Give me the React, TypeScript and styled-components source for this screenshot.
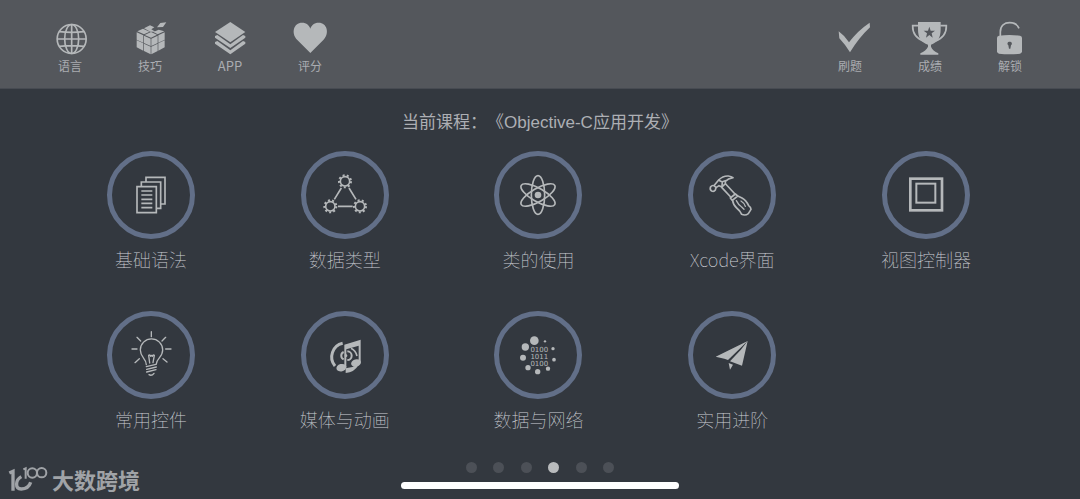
import React from "react";
import styled, { createGlobalStyle } from "styled-components";

const color = {
  page: "#33383f",
  header: "#54575c",
  icon: "#b5b8ba",
  label: "#aaacb1",
  ring: "#626f88",
};

const GlobalStyle = createGlobalStyle`
  * { box-sizing: border-box; }
  body {
    margin: 0;
    background: ${color.page};
    font-family: "Liberation Sans", "Noto Sans CJK SC", sans-serif;
  }
  button {
    margin: 0;
    padding: 0;
    border: 0;
    background: none;
    font: inherit;
    cursor: pointer;
  }
`;

const Page = styled.div`
  position: relative;
  display: flex;
  flex-direction: column;
  min-height: 100vh;
  background: ${color.page};
`;

const Header = styled.header`
  display: flex;
  justify-content: space-between;
  padding: 20px 30px 13px;
  background: ${color.header};
  border-bottom: 1px solid #474b52;
`;

const Tools = styled.nav`
  display: flex;
`;

const Tool = styled.button`
  display: flex;
  flex-direction: column;
  align-items: center;
  width: 80px;
`;

const ToolLabel = styled.span<{ $latin?: boolean }>`
  font-family: "Noto Sans CJK SC", sans-serif;
  font-size: ${(p) => (p.$latin ? 13 : 12)}px;
  font-weight: 400;
  line-height: 19px;
  color: ${color.label};
`;

const ToolSvg = styled.svg`
  width: 36px;
  height: 36px;
  overflow: visible;
  fill: ${color.icon};
  stroke: none;
`;

const Main = styled.main`
  display: flex;
  flex-direction: column;
  flex: 1;
  padding-top: 22px;
`;

const CourseTitle = styled.h1`
  margin: 0 0 16px;
  font-size: 17px;
  font-weight: 400;
  line-height: 24px;
  text-align: center;
  text-spacing-trim: space-all;
  color: #adafb4;
`;

const Lessons = styled.div`
  display: grid;
  grid-template-columns: repeat(5, 1fr);
  row-gap: 39px;
  padding: 0 57px 0 54px;
`;

const Lesson = styled.button`
  display: flex;
  flex-direction: column;
  align-items: center;
  gap: 7px;
`;

const Ring = styled.span`
  display: block;
  width: 88px;
  height: 88px;
  border: 5px solid ${color.ring};
  border-radius: 50%;
`;

const LessonSvg = styled.svg`
  display: block;
  width: 78px;
  height: 78px;
  fill: none;
  stroke: ${color.icon};
  stroke-width: 5;
`;

const LessonLabel = styled.span`
  font-family: "Noto Sans CJK SC", sans-serif;
  font-size: 18px;
  font-weight: 100;
  line-height: 26px;
  color: #cdcfd5;
`;

const Pager = styled.div`
  display: flex;
  justify-content: space-between;
  width: 149px;
  margin: 30px auto 9px;
`;

const Dot = styled.button<{ $active: boolean }>`
  && {
    width: 11px;
    height: 11px;
    border-radius: 50%;
    background: ${(p) => (p.$active ? "#b9bbbd" : "#4c5057")};
  }
`;

const HomeBar = styled.div`
  width: 278px;
  height: 7px;
  margin: 0 auto 10px;
  border-radius: 4px;
  background: #ffffff;
`;

const Watermark = styled.div`
  position: absolute;
  left: 8px;
  bottom: 5px;
  display: flex;
  align-items: center;
  gap: 4px;
  font-family: "Noto Sans CJK SC", sans-serif;
  font-size: 22px;
  font-weight: 700;
  line-height: 30px;
  color: #a0a3a7;
`;

const WatermarkSvg = styled.svg`
  width: 40px;
  height: 26px;
  fill: none;
  stroke: #a0a3a7;
`;

const Globe = () => (
  <ToolSvg viewBox="36 30 108 108">
    <g fill="none" stroke={color.icon} strokeWidth="5">
      <circle cx="95" cy="87" r="43.5" />
      <ellipse cx="95" cy="87" rx="21" ry="43.5" />
      <path d="M95 43V131M51 87H139M58 65Q95 69 132 65M58 109Q95 105 132 109" />
    </g>
  </ToolSvg>
);

const Cube = () => (
  <ToolSvg viewBox="276 30 108 108">
    <path d="M290 67L310 76V98L290 89ZM312 77L332 86V108L312 99ZM290 91L310 100V122L290 112ZM312 101L332 110V133L312 123Z" />
    <path d="M334 86L353 77V99L334 108ZM355 76L374 67V89L355 98ZM334 110L353 101V123L334 133ZM355 100L374 91V112L355 122Z" />
    <path d="M292 64L309 56L329 65L312 73ZM312 55L330 46L343 52L334 58L346 65L331 65ZM314 75L333 66L351 74L333 83ZM353 73L340 66L356 59L373 64ZM351 52L361 39L379 37L369 51Z" />
  </ToolSvg>
);

const Layers = () => (
  <ToolSvg viewBox="66 30 108 108">
    <path d="M121 36L166 66L121 97L75 66Z" />
    <path d="M75 78L82 75L121 103L159 75L166 78V83L121 114L75 83ZM75 96L82 93L121 121L159 93L166 96V101L121 133L75 101Z" />
  </ToolSvg>
);

const Heart = () => (
  <ToolSvg viewBox="306 30 108 108">
    <path d="M361 129L322 90C302 69 311 38 336 38C350 38 358 46 361 56C364 46 372 38 386 38C411 38 420 69 400 90Z" />
  </ToolSvg>
);

const Check = () => (
  <ToolSvg viewBox="36 30 108 108">
    <path d="M56 64Q74 77 87 97Q113 62 149 38L150 52Q116 84 90 127Q75 103 58 85Z" />
  </ToolSvg>
);

const Trophy = () => (
  <ToolSvg viewBox="276 30 108 108">
    <path d="M294 36H362V58C362 84 352 98 333 104V110Q338 122 355 130V134H301V130Q318 122 324 110V104C304 98 294 84 294 58Z" />
    <path d="M295 47H278Q277 81 313 94M361 47H379Q380 81 344 94" fill="none" stroke={color.icon} strokeWidth="5" />
    <path d="M328 50L332 62H345L335 70L338 83L328 75L318 83L321 70L311 62H324Z" fill={color.header} />
  </ToolSvg>
);

const Unlock = () => (
  <ToolSvg viewBox="516 30 108 108">
    <path d="M531 83Q531 78 537 77Q569 73 600 77Q606 78 606 83V124Q606 130 600 131Q569 135 537 131Q531 130 531 124Z" />
    <path d="M541 78V66C541 46 554 38 569 38C584 38 593 45 597 55" fill="none" stroke={color.icon} strokeWidth="5" />
    <path d="M569 95A6 6 0 0 1 573 106L571 116H567L565 106A6 6 0 0 1 569 95Z" fill={color.header} />
  </ToolSvg>
);

const Documents = () => (
  <LessonSvg viewBox="35 33 234 234">
    <path d="M110 125H168V203H110ZM123 125V111H181V190H168M137 111V97H194V177H181" />
    <path d="M123 138H156M123 150H156M123 163H156M123 175H156M123 188H156" />
  </LessonSvg>
);

const gears = [
  [163, 109],
  [119, 184],
  [208, 184],
];

const GearTriangle = () => (
  <LessonSvg viewBox="46 33 234 234">
    {gears.map(([x, y]) => (
      <g key={`${x}-${y}`}>
        <circle cx={x} cy={y} r="14" />
        <circle cx={x} cy={y} r="18" strokeWidth="6" strokeDasharray="6 6.57" />
      </g>
    ))}
    <path d="M152 129L131 163M175 129L196 163M142 184H186" />
  </LessonSvg>
);

const Atom = () => (
  <LessonSvg viewBox="43 33 234 234">
    {[0, 60, 120].map((angle) => (
      <ellipse key={angle} cx="160" cy="150" rx="20" ry="58" transform={`rotate(${angle} 160 150)`} />
    ))}
    <circle cx="160" cy="150" r="10" fill={color.icon} stroke="none" />
  </LessonSvg>
);

const Hammer = () => (
  <LessonSvg viewBox="40 169 234 234" strokeLinejoin="round" strokeLinecap="round">
    <path d="M93 261Q89 270 96 274Q103 277 107 271L109 263L103 258Q97 256 93 261Z" />
    <path d="M104 257L117 241Q130 228 146 229Q155 230 160 234Q145 237 137 245V252L127 262L118 258L109 264" />
    <path d="M117 242L128 247L127 260M128 246L137 243" />
    <path d="M126 263L153 292M138 253L166 283" />
    <path d="M152 295L167 283L174 289L158 302Z" />
    <path d="M159 303Q161 317 171 325Q181 333 186 344Q197 349 206 342L214 329Q214 323 207 318Q200 302 187 295L176 290" />
    <path d="M170 303Q177 317 186 322L193 329M184 304Q194 310 197 320" strokeWidth="4" />
  </LessonSvg>
);

const NestedSquares = () => (
  <LessonSvg viewBox="620 169 234 234">
    <rect x="690" y="237" width="95" height="95" strokeWidth="8" />
    <rect x="708" y="252" width="57" height="57" strokeWidth="6" />
  </LessonSvg>
);

const Bulb = () => (
  <LessonSvg viewBox="35 32 234 234" strokeLinecap="round" strokeLinejoin="round">
    <path d="M138 178C138 159 120 157 120 134A33 33 0 0 1 187 134C187 157 168 159 168 176" strokeWidth="4" />
    <path d="M138 184L167 177M139 192L168 185M139 200L167 193M146 208Q154 213 161 204" strokeWidth="4" />
    <path d="M148 173L145 150Q149 147 151 153Q153 147 156 153Q158 147 162 150L158 172" strokeWidth="4" />
    <path d="M153 79V94M110 96L121 107M196 96L185 107M95 131H110M196 131H212M104 172L117 160M200 170L188 160" strokeWidth="4" />
  </LessonSvg>
);

const Music = () => (
  <LessonSvg viewBox="46 32 234 234">
    <path d="M156 114A42 42 0 0 0 133 182" strokeWidth="9" />
    <path d="M165 189Q187 187 205 177Q191 202 165 203Z" fill={color.icon} stroke="none" />
    <path d="M159 140A12 12 0 0 0 159 162M170 138A13 13 0 0 1 170 164" strokeWidth="6" />
    <circle cx="166" cy="151" r="4" fill={color.icon} stroke="none" />
    <path d="M181 129Q195 136 199 152" strokeWidth="5" />
    <path d="M161 118L210 103V172H204V121L167 132V187H161Z" fill={color.icon} stroke="none" />
    <ellipse cx="152" cy="187" rx="15" ry="11" transform="rotate(-15 152 187)" fill={color.icon} stroke="none" />
    <ellipse cx="196" cy="173" rx="15" ry="11" transform="rotate(-15 196 173)" fill={color.icon} stroke="none" />
  </LessonSvg>
);

const bits = [
  [149, 106, 13],
  [122, 125, 11],
  [115, 157, 9],
  [130, 187, 8],
  [159, 199, 8],
  [190, 190, 6.5],
  [208, 163, 5.5],
  [205, 130, 5],
  [181, 108, 3.5],
];

const BinaryDots = () => (
  <LessonSvg viewBox="43 32 234 234">
    <g fill={color.icon} stroke="none">
      {bits.map(([x, y, r]) => (
        <circle key={`${x}-${y}`} cx={x} cy={y} r={r} />
      ))}
      <text fontFamily="DejaVu Sans, sans-serif" fontSize="21" textAnchor="middle">
        <tspan x="164" y="141">0100</tspan>
        <tspan x="164" y="161">1011</tspan>
        <tspan x="164" y="181">0100</tspan>
      </text>
    </g>
  </LessonSvg>
);

const PaperPlane = () => (
  <LessonSvg viewBox="40 32 234 234">
    <path
      d="M108 154L204 107L145 164L134 160ZM204 107L187 181L151 168L183 134ZM147 173L160 178L151 193Z"
      fill={color.icon}
      stroke="none"
    />
  </LessonSvg>
);

const leftTools = [
  { label: "语言", Icon: Globe },
  { label: "技巧", Icon: Cube },
  { label: "APP", Icon: Layers, latin: true },
  { label: "评分", Icon: Heart },
];

const rightTools = [
  { label: "刷题", Icon: Check },
  { label: "成绩", Icon: Trophy },
  { label: "解锁", Icon: Unlock },
];

const lessons = [
  { label: "基础语法", Icon: Documents },
  { label: "数据类型", Icon: GearTriangle },
  { label: "类的使用", Icon: Atom },
  { label: "Xcode界面", Icon: Hammer },
  { label: "视图控制器", Icon: NestedSquares },
  { label: "常用控件", Icon: Bulb },
  { label: "媒体与动画", Icon: Music },
  { label: "数据与网络", Icon: BinaryDots },
  { label: "实用进阶", Icon: PaperPlane },
];

type ToolItem = { label: string; Icon: () => React.ReactElement; latin?: boolean };

const ToolGroup = ({ items }: { items: ToolItem[] }) => (
  <Tools>
    {items.map(({ label, Icon, latin }) => (
      <Tool key={label} type="button">
        <Icon />
        <ToolLabel $latin={latin}>{label}</ToolLabel>
      </Tool>
    ))}
  </Tools>
);

export default function App() {
  const [page, setPage] = React.useState(3);
  return (
    <Page>
      <GlobalStyle />
      <Header>
        <ToolGroup items={leftTools} />
        <ToolGroup items={rightTools} />
      </Header>
      <Main>
        <CourseTitle>当前课程：《Objective-C应用开发》</CourseTitle>
        <Lessons>
          {lessons.map(({ label, Icon }) => (
            <Lesson key={label} type="button">
              <Ring>
                <Icon />
              </Ring>
              <LessonLabel>{label}</LessonLabel>
            </Lesson>
          ))}
        </Lessons>
        <Pager>
          {[0, 1, 2, 3, 4, 5].map((i) => (
            <Dot key={i} type="button" aria-label={`${i + 1}`} $active={i === page} onClick={() => setPage(i)} />
          ))}
        </Pager>
        <HomeBar />
      </Main>
      <Watermark>
        <WatermarkSvg viewBox="24 30 120 78">
          <path d="M28 51L39 46V104" strokeWidth="10" />
          <path d="M64 62C46 72 44 98 64 99C78 99 88 92 92 79" strokeWidth="10" />
          <path d="M70 40L77 37V68" strokeWidth="6" />
          <circle cx="97" cy="51" r="14" strokeWidth="6" />
          <circle cx="125" cy="50" r="14" strokeWidth="6" />
        </WatermarkSvg>
        <span>大数跨境</span>
      </Watermark>
    </Page>
  );
}
